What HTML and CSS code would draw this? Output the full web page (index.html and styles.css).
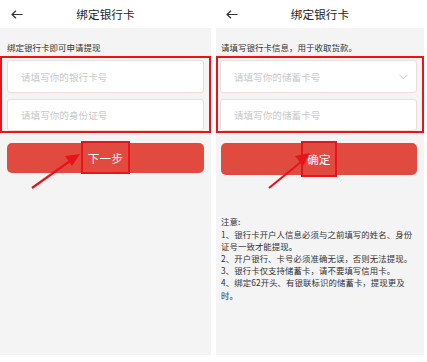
FILE: index.html
```html
<!DOCTYPE html>
<html lang="zh">
<head>
<meta charset="utf-8">
<link rel="stylesheet" href="styles.css">
</head>
<body>
<div class="page">
  <section class="panel panel-left">
    <header class="header">
      <svg class="back" width="12" height="9" viewBox="0 0 12 9"><path d="M11.5 4.5H1M5 0.8L1 4.5L5 8.2" fill="none" stroke="#333" stroke-width="1.2"/></svg>
      <span class="title">绑定银行卡</span>
    </header>
    <p class="sub">绑定银行卡即可申请提现</p>
    <div class="redbox">
      <div class="field">请填写你的银行卡号</div>
      <div class="field">请填写你的身份证号</div>
    </div>
    <div class="btn-wrap">
      <button class="btn">下一步</button>
      <span class="hl hl-left"></span>
      <svg class="arrow arrow-left" width="60" height="40" viewBox="0 0 60 40"><line x1="2" y1="38" x2="40" y2="11" stroke="#e8141c" stroke-width="2.2"/><polygon points="50,4 35,6 42,16" fill="#e8141c"/></svg>
    </div>
  </section>
  <section class="panel panel-right">
    <header class="header">
      <svg class="back" width="12" height="9" viewBox="0 0 12 9"><path d="M11.5 4.5H1M5 0.8L1 4.5L5 8.2" fill="none" stroke="#333" stroke-width="1.2"/></svg>
      <span class="title">绑定银行卡</span>
    </header>
    <p class="sub">请填写银行卡信息，用于收取货款。</p>
    <div class="redbox">
      <div class="field">请填写你的储蓄卡号<svg class="chev" width="9" height="6" viewBox="0 0 9 6"><path d="M0.5 0.8L4.5 4.8L8.5 0.8" fill="none" stroke="#c4c4c4" stroke-width="1"/></svg></div>
      <div class="field">请填写你的储蓄卡号</div>
    </div>
    <div class="btn-wrap">
      <button class="btn btn-tall">确定</button>
      <span class="hl hl-right"></span>
      <svg class="arrow arrow-right" width="60" height="40" viewBox="0 0 60 40"><line x1="2" y1="38" x2="34" y2="12" stroke="#e8141c" stroke-width="2.2"/><polygon points="43,3 28,6 36,16" fill="#e8141c"/></svg>
    </div>
    <div class="notes">
      <div>注意:</div>
      <div>1、银行卡开户人信息必须与之前填写的姓名、身份</div>
      <div>证号一致才能提现。</div>
      <div>2、开户银行、卡号必须准确无误，否则无法提现。</div>
      <div>3、银行卡仅支持储蓄卡，请不要填写信用卡。</div>
      <div>4、绑定62开头、有银联标识的储蓄卡，提现更及</div>
      <div>时。</div>
    </div>
  </section>
</div>
</body>
</html>
```
FILE: styles.css
```css
* { box-sizing: border-box; }
html, body { margin: 0; padding: 0; background: #fff; }
body {
  font-family: "Noto Sans CJK SC", "Noto Sans", sans-serif;
  color: #333;
  width: 427px;
  height: 362px;
  overflow: hidden;
}
.page {
  display: flex;
  gap: 5px;
}
.panel {
  background: #f4f4f4;
  height: 355px;
  position: relative;
}
.panel-left { width: 211px; }
.panel-right { width: 208px; }
.header {
  height: 28px;
  background: #fff;
  display: flex;
  align-items: center;
  justify-content: center;
  position: relative;
}
.back {
  position: absolute;
  left: 11px;
  top: 10px;
}
.panel-right .back { left: 10px; }
.title {
  font-size: 11.6px;
  color: #222;
  letter-spacing: 0.1px;
}
.sub {
  margin: 0;
  font-size: 8.5px;
  line-height: 12.4px;
  padding: 13px 7px 3px;
  color: #333;
  white-space: nowrap;
}
.panel-right .sub { padding-left: 5px; }
.redbox {
  border: 2px solid #e8141c;
  padding: 2px 5px 0 5px;
  display: flex;
  flex-direction: column;
  gap: 6px;
}
.panel-right .redbox { padding-left: 2px; }
.field {
  height: 33px;
  background: #fff;
  border: 1px solid #ecdcdc;
  border-radius: 3px;
  display: flex;
  align-items: center;
  justify-content: space-between;
  padding: 0 8px 0 13px;
  font-size: 9.6px;
  color: #c9c9c9;
}
.field:last-child { height: 32px; }
.btn-wrap {
  position: relative;
  padding: 10px 7px 0;
}
.panel-right .btn-wrap { padding: 10px 7px 0 5px; }
.btn {
  display: block;
  width: 100%;
  height: 30px;
  border: none;
  border-radius: 5px;
  background: #e14a3f;
  color: #fff;
  font-family: inherit;
  font-size: 11.5px;
  letter-spacing: 0.3px;
  padding: 0;
}
.btn-tall { height: 32px; }
.hl {
  position: absolute;
  border: 2px solid #e8141c;
}
.hl-left { left: 81px; top: 8px; width: 49px; height: 33px; }
.hl-right { left: 85px; top: 8px; width: 36px; height: 36px; }
.arrow { position: absolute; }
.arrow-left { left: 30px; top: 17px; }
.arrow-right { left: 51px; top: 17px; }
.notes {
  padding: 40px 5px 0 5px;
  font-size: 8.4px;
  line-height: 12.2px;
  color: #333;
  white-space: nowrap;
  letter-spacing: 0.1px;
}
```
